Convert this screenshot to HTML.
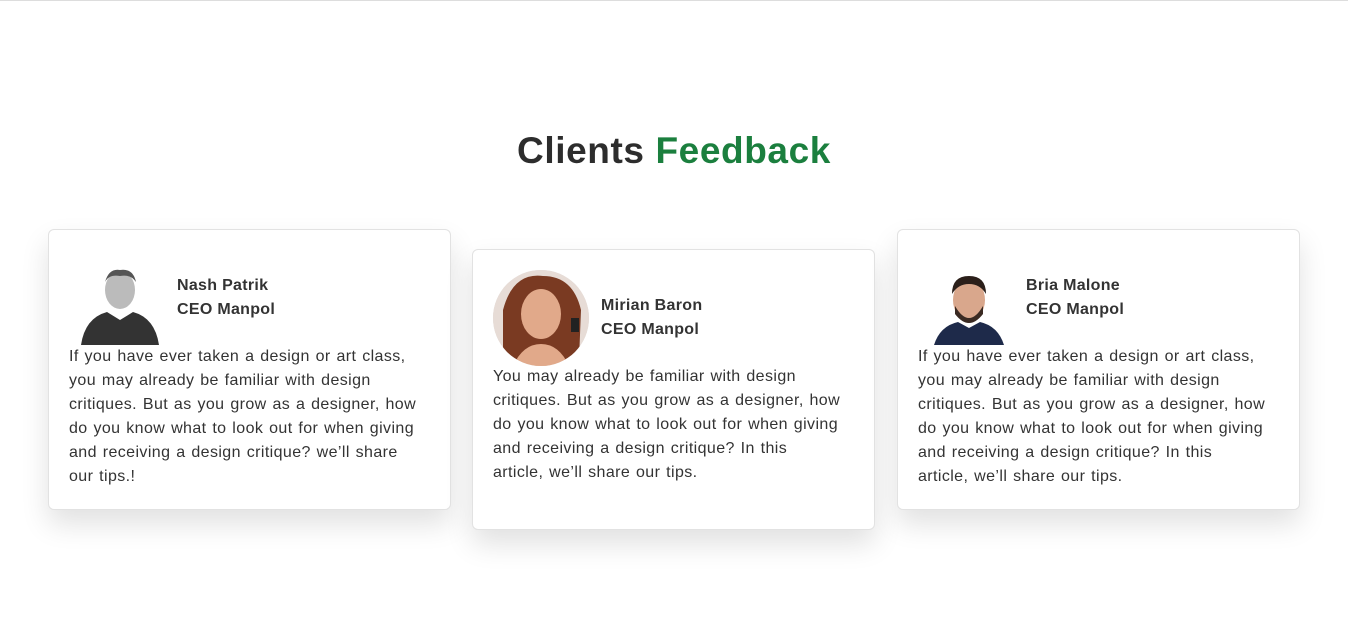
<!DOCTYPE html>
<html><head><meta charset="utf-8"><style>
*{margin:0;padding:0;box-sizing:border-box}
body{width:1348px;height:618px;background:#fff;font-family:"Liberation Sans",sans-serif;position:relative;overflow:hidden;border-top:1px solid #ddd}
h1{position:absolute;top:129px;left:0;width:100%;text-align:center;font-size:37px;font-weight:700;color:#2d2d2d;letter-spacing:0.6px}
h1 span{color:#1b7f3e}
.card{position:absolute;width:403px;height:281px;border:1px solid #e2e2e2;border-radius:6px;background:#fff;box-shadow:0 14px 28px rgba(0,0,0,.12)}
.av{position:absolute;left:30px;top:22px;width:82px;height:93px;overflow:hidden}
.name{position:absolute;left:128px;top:44px;font-size:16px;font-weight:700;color:#333;line-height:24px;letter-spacing:0.3px}
.txt{position:absolute;left:20px;top:115px;width:380px;font-size:16px;color:#333;line-height:24px;white-space:nowrap;letter-spacing:0.4px;word-spacing:1px}
</style></head><body>
<h1>Clients <span>Feedback</span></h1>

<div class="card" style="left:48px;top:228px">
<div class="av"><svg width="82" height="93"><ellipse cx="41" cy="38" rx="15" ry="19" fill="#bbb"/><path d="M26 30 Q30 16 41 18 Q54 16 57 30 Q52 22 41 24 Q30 22 26 30Z" fill="#555"/><path d="M2 93 Q6 66 28 60 L41 68 L54 60 Q76 66 80 93Z" fill="#333"/></svg></div>
<div class="name">Nash Patrik<br>CEO Manpol</div>
<div class="txt">If you have ever taken a design or art class,<br>you may already be familiar with design<br>critiques. But as you grow as a designer, how<br>do you know what to look out for when giving<br>and receiving a design critique? we’ll share<br>our tips.!</div>
</div>

<div class="card" style="left:472px;top:248px">
<div class="av" style="left:20px;top:20px;width:96px;height:96px;border-radius:50%;background:#ddd"><svg width="96" height="96"><rect width="96" height="96" fill="#e7dcd6"/><path d="M10 40 Q20 2 50 6 Q80 6 88 40 L86 90 L10 90Z" fill="#7a3a22"/><ellipse cx="48" cy="44" rx="20" ry="25" fill="#e1a98a"/><path d="M20 96 Q30 74 48 74 Q66 74 76 96Z" fill="#e1a98a"/><path d="M78 48 h8 v14 h-8z" fill="#222"/></svg></div>
<div class="name">Mirian Baron<br>CEO Manpol</div>
<div class="txt">You may already be familiar with design<br>critiques. But as you grow as a designer, how<br>do you know what to look out for when giving<br>and receiving a design critique? In this<br>article, we’ll share our tips.</div>
</div>

<div class="card" style="left:897px;top:228px">
<div class="av"><svg width="82" height="93"><ellipse cx="41" cy="48" rx="16" ry="21" fill="#d9a78c"/><path d="M24 42 Q24 24 41 24 Q58 24 58 42 Q52 32 41 32 Q30 32 24 42Z" fill="#2b1f1a"/><path d="M27 54 Q41 78 55 54 L55 62 Q41 80 27 62Z" fill="#3a2a22"/><path d="M6 93 Q12 74 30 70 L41 76 L52 70 Q70 74 76 93Z" fill="#1e2a4a"/></svg></div>
<div class="name">Bria Malone<br>CEO Manpol</div>
<div class="txt">If you have ever taken a design or art class,<br>you may already be familiar with design<br>critiques. But as you grow as a designer, how<br>do you know what to look out for when giving<br>and receiving a design critique? In this<br>article, we’ll share our tips.</div>
</div>
</body></html>
